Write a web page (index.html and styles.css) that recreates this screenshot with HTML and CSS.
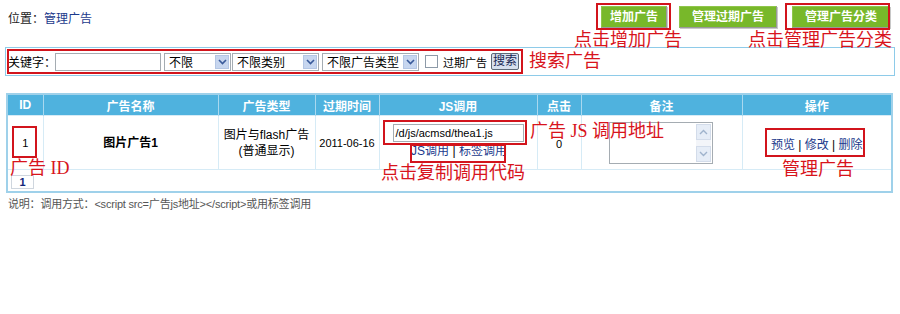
FILE: index.html
```html
<!DOCTYPE html>
<html lang="zh-CN">
<head>
<meta charset="utf-8">
<title>管理广告</title>
<link rel="stylesheet" href="styles.css">
</head>
<body>
<div class="page">
  <div class="top">
    <div class="loc">位置：<a href="#">管理广告</a></div>
    <div class="btns">
      <a class="gbtn b1" href="#">增加广告</a>
      <a class="gbtn b2" href="#">管理过期广告</a>
      <a class="gbtn b3" href="#">管理广告分类</a>
    </div>
  </div>

  <div class="search">
    <span class="lbl">关键字：</span>
    <span class="txt kw"></span>
    <span class="sel s1"><span class="st">不限</span><span class="arr"><svg width="9" height="6" viewBox="0 0 9 6"><path d="M1 1l3.5 3.5L8 1" fill="none" stroke="#3a5a9a" stroke-width="1.6"/></svg></span></span>
    <span class="sel s2"><span class="st">不限类别</span><span class="arr"><svg width="9" height="6" viewBox="0 0 9 6"><path d="M1 1l3.5 3.5L8 1" fill="none" stroke="#3a5a9a" stroke-width="1.6"/></svg></span></span>
    <span class="sel s3"><span class="st">不限广告类型</span><span class="arr"><svg width="9" height="6" viewBox="0 0 9 6"><path d="M1 1l3.5 3.5L8 1" fill="none" stroke="#3a5a9a" stroke-width="1.6"/></svg></span></span>
    <span class="chk"></span>
    <span class="chklbl">过期广告</span>
    <span class="sbtn">搜索</span>
  </div>

  <table class="grid">
    <colgroup>
      <col class="c1"><col class="c2"><col class="c3"><col class="c4"><col class="c5"><col class="c6"><col class="c7"><col class="c8">
    </colgroup>
    <thead>
      <tr><th>ID</th><th>广告名称</th><th>广告类型</th><th>过期时间</th><th>JS调用</th><th>点击</th><th>备注</th><th>操作</th></tr>
    </thead>
    <tbody>
      <tr class="r1">
        <td class="num">1</td>
        <td class="name">图片广告1</td>
        <td>图片与flash广告<br>(普通显示)</td>
        <td class="num">2011-06-16</td>
        <td class="js">
          <span class="jsbox">/d/js/acmsd/thea1.js</span>
          <span class="links"><a href="#">JS调用</a> | <a href="#">标签调用</a></span>
        </td>
        <td class="num clicks">0</td>
        <td class="memo">
          <span class="ta"><span class="sb"><span class="up"><svg width="9" height="6" viewBox="0 0 9 6"><path d="M1 5l3.5-3.5L8 5" fill="none" stroke="#9fb3cc" stroke-width="1.4"/></svg></span><span class="dn"><svg width="9" height="6" viewBox="0 0 9 6"><path d="M1 1l3.5 3.5L8 1" fill="none" stroke="#9fb3cc" stroke-width="1.4"/></svg></span></span></span>
        </td>
        <td class="ops"><a href="#">预览</a> | <a href="#">修改</a> | <a href="#">删除</a></td>
      </tr>
      <tr class="r2">
        <td colspan="8"><span class="pg">1</span></td>
      </tr>
    </tbody>
  </table>

  <p class="note">说明：调用方式：&lt;script src=广告js地址&gt;&lt;/script&gt;或用标签调用</p>

  <div class="box" style="left:596px;top:3px;width:75px;height:27px"></div>
  <div class="box" style="left:785px;top:3px;width:105px;height:27px"></div>
  <div class="box" style="left:7px;top:49px;width:516px;height:25px"></div>
  <div class="box" style="left:12px;top:126px;width:25px;height:32px"></div>
  <div class="box" style="left:383px;top:120px;width:144px;height:25px"></div>
  <div class="box" style="left:410px;top:144px;width:96px;height:19px"></div>
  <div class="box" style="left:765px;top:128px;width:100px;height:29px"></div>

  <div class="ann" style="left:574px;top:29px">点击增加广告</div>
  <div class="ann" style="left:748px;top:29px">点击管理广告分类</div>
  <div class="ann" style="left:529px;top:50px">搜索广告</div>
  <div class="ann" style="left:10px;top:157px">广告 ID</div>
  <div class="ann" style="left:530px;top:120px">广告 JS 调用地址</div>
  <div class="ann" style="left:381px;top:162px">点击复制调用代码</div>
  <div class="ann" style="left:782px;top:158px">管理广告</div>
</div>
</body>
</html>
```

FILE: styles.css
```css
html, body {
  margin: 0;
  padding: 0;
  background: #fff;
}
body {
  font-family: "Liberation Sans", "Noto Sans CJK SC", sans-serif;
  font-size: 12px;
  color: #000;
}
a { color: #1b3a8c; text-decoration: none; }

.page {
  position: relative;
  width: 900px;
  height: 314px;
}

/* top bar */
.top {
  display: flex;
  align-items: center;
  justify-content: space-between;
  height: 34px;
  padding: 0 10px 0 8px;
}
.loc { color: #222; }
.loc a { color: #1b3a8c; }
.btns {
  display: flex;
  align-items: center;
  gap: 12px;
}
.gbtn {
  display: block;
  height: 20px;
  line-height: 20px;
  background: #78b82a;
  color: #fff;
  font-weight: bold;
  text-align: center;
  border: 1px solid #8fc64a;
  border-right-color: #9a9a9a;
  border-bottom-color: #9a9a9a;
  box-shadow: 1px 1px 0 #c8c8c8;
}
.b1 { width: 64px; }
.b2 { width: 96px; }
.b3 { width: 96px; margin-left: 3px; }

/* search panel */
.search {
  display: flex;
  align-items: center;
  margin: 13px 0 0 5px;
  width: 886px;
  height: 27px;
  border: 1px solid #8ecbe9;
  padding-left: 2px;
}
.lbl { width: 48px; }
.txt {
  display: block;
  box-sizing: border-box;
  height: 18px;
  border: 1px solid #a5acb2;
  background: #fff;
}
.kw { width: 106px; margin-left: -1px; }
.sel {
  display: flex;
  align-items: center;
  box-sizing: border-box;
  height: 18px;
  border: 1px solid #a5acb2;
  background: #fff;
  padding: 0 1px 0 4px;
}
.sel .st { flex: 1; white-space: nowrap; }
.sel .arr {
  display: flex;
  align-items: center;
  justify-content: center;
  width: 14px;
  height: 14px;
  background: #c7d6ef;
  border: 1px solid #b4c6e4;
  box-sizing: border-box;
}
.s1 { width: 67px; margin-left: 3px; }
.s2 { width: 87px; margin-left: 1px; }
.s3 { width: 97px; margin-left: 3px; }
.chk {
  display: block;
  width: 11px;
  height: 11px;
  border: 1px solid #8d9aa8;
  background: #fff;
  margin-left: 6px;
}
.chklbl { margin-left: 5px; font-size: 11px; }
.sbtn {
  display: block;
  box-sizing: border-box;
  width: 28px;
  height: 17px;
  line-height: 14px;
  margin-left: 4px;
  text-align: center;
  background: #d7e0ee;
  border: 1px solid #5e6a78;
  border-radius: 2px;
  color: #1b2a55;
}

/* table */
.grid {
  margin: 17px 0 0 6px;
  width: 885px;
  border-collapse: collapse;
  border: 2px solid #9fd1ea;
  table-layout: fixed;
}
.c1 { width: 36px; }
.c2 { width: 175px; }
.c3 { width: 97px; }
.c4 { width: 64px; }
.c5 { width: 158px; }
.c6 { width: 44px; }
.c7 { width: 161px; }
.c8 { width: 150px; }
.grid th {
  height: 20px;
  background: #4fb2de;
  color: #fff;
  font-weight: bold;
  border-left: 1px solid #a9d8ef;
  padding: 0;
}
.grid th:first-child { border-left: none; }
.grid td {
  border-left: 1px solid #d6ebf6;
  border-top: 1px solid #d6ebf6;
  text-align: center;
  padding: 0;
  line-height: 16px;
}
.grid td:first-child { border-left: none; }
.r1 td { height: 49px; }
.r1 .num { font-size: 11px; }
.r1 .clicks { padding-top: 2px; }
.r1 .name { font-weight: bold; }
.js {
  vertical-align: top;
}
.jsbox {
  display: block;
  box-sizing: border-box;
  width: 131px;
  height: 18px;
  margin: 8px 0 0 13px;
  border: 1px solid #a5acb2;
  text-align: left;
  padding-left: 2px;
  font-size: 11px;
  line-height: 16px;
  white-space: nowrap;
}
.links {
  display: block;
  margin-top: 1px;
  padding-left: 2px;
}
.ta {
  display: flex;
  justify-content: flex-end;
  box-sizing: border-box;
  width: 104px;
  height: 42px;
  border: 1px solid #a5acb2;
  margin: 0 0 0 27px;
  padding: 1px;
}
.sb {
  display: flex;
  flex-direction: column;
  justify-content: space-between;
  width: 15px;
  background: #f3f5f9;
}
.sb .up, .sb .dn {
  display: flex;
  align-items: center;
  justify-content: center;
  height: 14px;
  background: #e6edf7;
  border: 1px solid #d3dcea;
}
.ops { padding-top: 4px !important; }
.r2 td {
  height: 21px;
  text-align: left;
  padding-left: 2px;
  vertical-align: top;
}
.pg {
  display: inline-block;
  box-sizing: border-box;
  width: 23px;
  height: 14px;
  line-height: 12px;
  margin: 5px 0 0 1px;
  border: 1px solid #cfd6de;
  text-align: center;
  color: #12267a;
  font-weight: bold;
  font-size: 11px;
  vertical-align: top;
}
.note {
  margin: 3px 0 0 8px;
  color: #555;
  font-size: 11px;
  line-height: 16px;
  letter-spacing: -0.2px;
}

/* annotations overlay */
.box {
  position: absolute;
  box-sizing: border-box;
  border: 2px solid #d2141c;
}
.ann {
  position: absolute;
  color: #d8141c;
  font-family: "Liberation Serif", "Noto Sans CJK SC", serif;
  font-size: 18px;
  line-height: 22px;
  white-space: nowrap;
}
```
